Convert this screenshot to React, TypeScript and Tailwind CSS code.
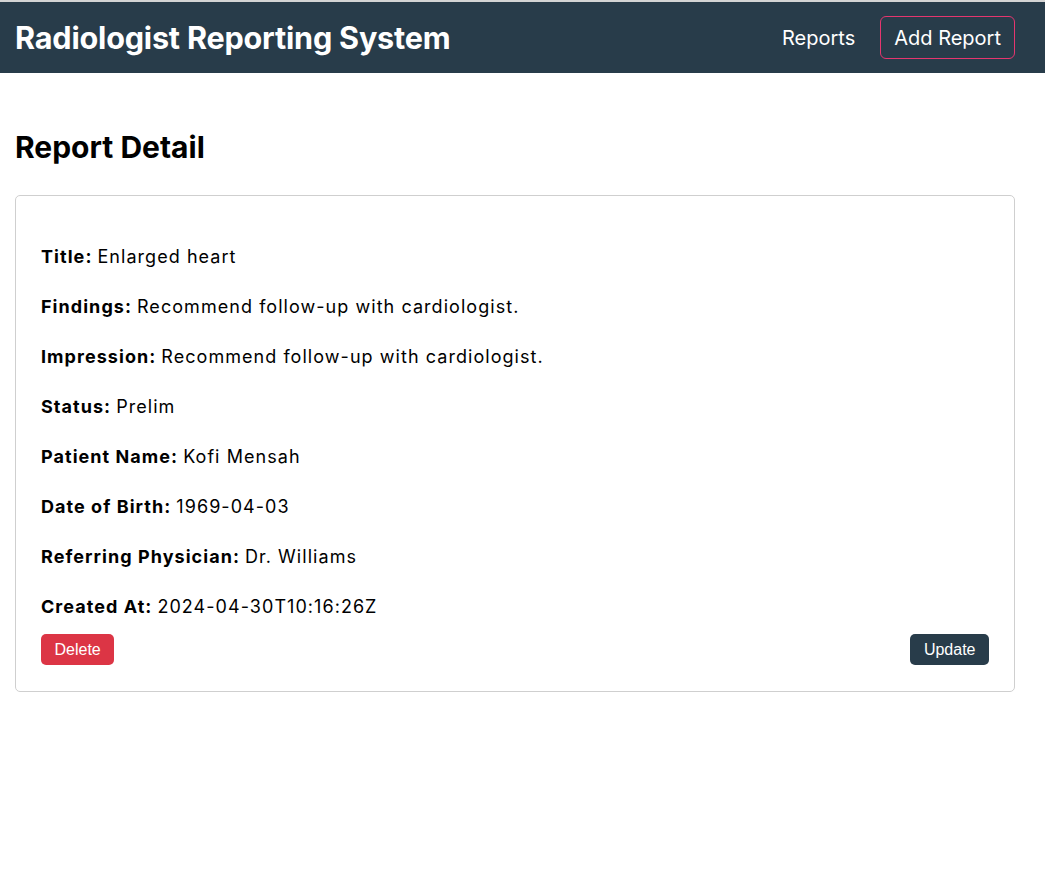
import React from 'react';

interface FieldProps {
  label: string;
  value: string;
}

const Field: React.FC<FieldProps> = ({ label, value }) => (
  <div className="h-[50px] flex items-center text-[18px] text-black tracking-[1.05px]">
    <span className="font-bold">{label}</span>
    <span className="ml-[5px]">{value}</span>
  </div>
);

const fields: FieldProps[] = [
  { label: 'Title:', value: 'Enlarged heart' },
  { label: 'Findings:', value: 'Recommend follow-up with cardiologist.' },
  { label: 'Impression:', value: 'Recommend follow-up with cardiologist.' },
  { label: 'Status:', value: 'Prelim' },
  { label: 'Patient Name:', value: 'Kofi Mensah' },
  { label: 'Date of Birth:', value: '1969-04-03' },
  { label: 'Referring Physician:', value: 'Dr. Williams' },
  { label: 'Created At:', value: '2024-04-30T10:16:26Z' },
];

export default function App() {
  return (
    <div className="min-h-[888px] bg-white font-['Inter',sans-serif]">
      <div className="h-[2px] bg-[#d4d4d4]" />
      <header className="h-[71px] bg-[#283c4a] flex items-center justify-between pl-[15px] pr-[30px]">
        <h1 className="text-[30.6px] font-bold text-white tracking-[-0.2px]">Radiologist Reporting System</h1>
        <nav className="flex items-center gap-[25px]">
          <a className="text-[20px] text-white">Reports</a>
          <a className="text-[20px] text-white border border-[#e5366f] rounded-[6px] h-[43px] px-[13px] flex items-center">
            Add Report
          </a>
        </nav>
      </header>

      <main className="px-[15px] pt-[56px]">
        <h2 className="text-[30px] font-bold text-black leading-[36px]">Report Detail</h2>
        <div className="mt-[30px] w-[1000px] border border-[#cfcfcf] rounded-[5px] px-[25px] pt-[35px] pb-[26px]">
          {fields.map((f) => (
            <Field key={f.label} {...f} />
          ))}
          <div className="mt-[3px] flex justify-between font-['Liberation_Sans',sans-serif]">
            <button className="h-[31px] px-[13.5px] rounded-[5px] bg-[#dc3545] text-white text-[16px]">Delete</button>
            <button className="h-[31px] px-[13.5px] rounded-[5px] bg-[#283c4a] text-white text-[16px]">Update</button>
          </div>
        </div>
      </main>
    </div>
  );
}
